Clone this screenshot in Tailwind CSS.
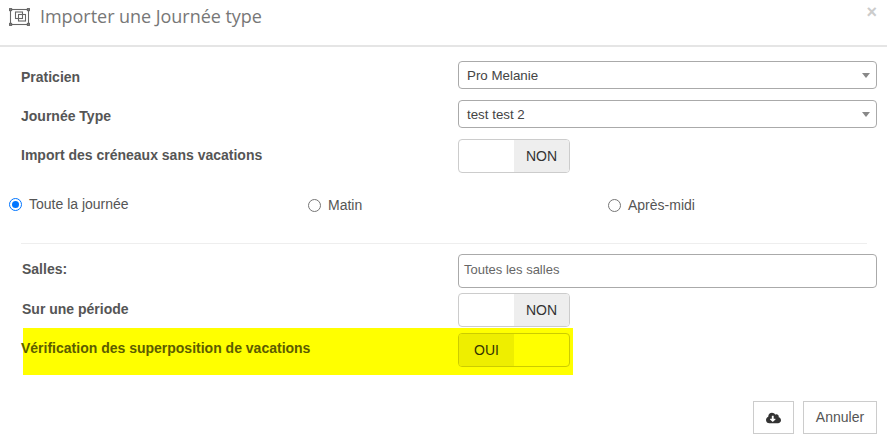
<!DOCTYPE html>
<html lang="fr">
<head>
    <meta charset="UTF-8">
    <title>Importer une Journée type</title>
    <script src="https://cdn.jsdelivr.net/npm/@tailwindcss/browser@4"></script>
</head>
<body class="bg-white w-[887px] h-[444px] overflow-hidden font-['Liberation_Sans',sans-serif] text-[14px] text-[#555]">

    <!-- header -->
    <div class="relative h-[47px] border-b-2 border-[#e5e5e5] pl-[9px] pt-[6px] flex items-start">
        <svg class="w-[21px] h-[18px] mt-[2px]" viewBox="0 0 21 18" fill="none" stroke="#666" stroke-width="1.1">
            <rect x="1.5" y="1.5" width="18" height="15" />
            <rect x="6.5" y="4" width="7" height="6.5" />
            <rect x="9.5" y="6.5" width="7" height="6.5" />
            <rect x="0.6" y="0.6" width="2" height="2" fill="#888" />
            <rect x="18.4" y="0.6" width="2" height="2" fill="#888" />
            <rect x="0.6" y="15.4" width="2" height="2" fill="#888" />
            <rect x="18.4" y="15.4" width="2" height="2" fill="#888" />
        </svg>
        <span class="ml-[10px] font-['Open_Sans',sans-serif] text-[18px] tracking-[-0.04px] leading-[20px] text-[#777]">Importer une Journée type</span>
        <span class="absolute right-[10px] top-[3px] text-[18px] leading-[18px] font-bold text-[#ccc]">×</span>
    </div>

    <!-- form -->
    <div class="pt-[14px] pl-[21px] pr-[10px]">
        <div class="flex items-start h-[28px]">
            <label class="w-[437px] font-bold pt-[8px] leading-[16px]">Praticien</label>
            <div class="w-[419px] h-[28px] border border-[#aaa] rounded-[4px] flex items-center justify-between pl-[8px] pr-[6px] text-[13.33px] text-[#444]">
                <span class="mt-[1px]">Pro Melanie</span>
                <span class="w-0 h-0 border-x-[4px] border-x-transparent border-t-[5px] border-t-[#888]"></span>
            </div>
        </div>
        <div class="flex items-start h-[28px] mt-[11px]">
            <label class="w-[437px] font-bold pt-[8px] leading-[16px]">Journée Type</label>
            <div class="w-[419px] h-[28px] border border-[#aaa] rounded-[4px] flex items-center justify-between pl-[8px] pr-[6px] text-[13.33px] text-[#444]">
                <span class="mt-[1px]">test test 2</span>
                <span class="w-0 h-0 border-x-[4px] border-x-transparent border-t-[5px] border-t-[#888]"></span>
            </div>
        </div>
        <div class="flex items-start h-[34px] mt-[11px]">
            <label class="w-[437px] font-bold pt-[8px] leading-[16px]">Import des créneaux sans vacations</label>
            <div class="w-[112px] h-[34px] border border-[#ccc] rounded-[4px] flex overflow-hidden">
                <span class="w-[55px]"></span>
                <span class="w-[55px] bg-[#eee] text-[#333] flex items-center justify-center">NON</span>
            </div>
        </div>
    </div>

    <!-- radios -->
    <div class="flex pl-[9px] mt-[22px] h-[18px] items-center">
        <div class="w-[299px] flex items-center">
            <span class="w-[13px] h-[13px] rounded-full border-[1.5px] border-[#0075ff] flex items-center justify-center"><span class="w-[7px] h-[7px] rounded-full bg-[#0075ff]"></span></span>
            <span class="ml-[7px]">Toute la journée</span>
        </div>
        <div class="w-[300px] flex items-center mt-[2px]">
            <span class="w-[13px] h-[13px] rounded-full border border-[#767676]"></span>
            <span class="ml-[7px]">Matin</span>
        </div>
        <div class="flex items-center mt-[2px]">
            <span class="w-[13px] h-[13px] rounded-full border border-[#767676]"></span>
            <span class="ml-[7px]">Après-midi</span>
        </div>
    </div>

    <div class="ml-[21px] w-[846px] border-t border-[#eee] mt-[30px]"></div>

    <div class="pt-[10px] pl-[22px]">
        <div class="flex items-start h-[34px]">
            <label class="w-[436px] font-bold pt-[7px] leading-[16px]">Salles:</label>
            <div class="w-[419px] h-[34px] border border-[#aaa] rounded-[4px] flex items-center pl-[5px] pb-[2px] text-[13px] text-[#666]">Toutes les salles</div>
        </div>
        <div class="flex items-start h-[34px] mt-[5px]">
            <label class="w-[436px] font-bold pt-[8px] leading-[16px]">Sur une période</label>
            <div class="w-[112px] h-[34px] border border-[#ccc] rounded-[4px] flex overflow-hidden">
                <span class="w-[55px]"></span>
                <span class="w-[55px] bg-[#eee] text-[#333] flex items-center justify-center">NON</span>
            </div>
        </div>
        <!-- surlignage jaune -->
        <div class="relative flex items-start h-[34px] mt-[6px]">
            <div class="absolute left-[1px] -top-[5px] w-[550px] h-[47px] bg-[#ffff00]"></div>
            <label class="relative w-[436px] -ml-[1px] mr-[1px] font-bold pt-[7px] leading-[16px] text-[#5c5c00]">Vérification des superposition de vacations</label>
            <div class="relative w-[112px] h-[34px] border border-[#cccc00] rounded-[4px] flex overflow-hidden">
                <span class="w-[55px] bg-[#eeee00] text-[#333300] flex items-center justify-center">OUI</span>
                <span class="w-[55px]"></span>
            </div>
        </div>
    </div>

    <!-- footer -->
    <div class="flex justify-end gap-[9px] pr-[10px] mt-[34px]">
        <div class="w-[41px] h-[33px] border border-[#ccc] flex items-center justify-center">
            <svg class="w-[15px] h-[12px]" viewBox="0 0 640 512" fill="#333"><path d="M537.6 226.6c4.1-10.7 6.4-22.4 6.4-34.6 0-53-43-96-96-96-19.7 0-38.1 6-53.3 16.2C367 64.2 315.3 32 256 32c-88.4 0-160 71.6-160 160 0 2.7.1 5.4.2 8.1C40.2 219.8 0 273.2 0 336c0 79.5 64.5 144 144 144h368c70.7 0 128-57.3 128-128 0-61.9-44-113.6-102.4-125.4zm-132.9 88.7L299.3 420.7c-6.2 6.2-16.4 6.2-22.6 0L171.3 315.3c-10.1-10.1-2.9-27.3 11.3-27.3H248V176c0-8.8 7.2-16 16-16h48c8.8 0 16 7.2 16 16v112h65.4c14.2 0 21.4 17.2 11.3 27.3z"/></svg>
        </div>
        <div class="w-[74px] h-[33px] border border-[#ccc] flex items-center justify-center text-[#555]">Annuler</div>
    </div>

</body>
</html>
